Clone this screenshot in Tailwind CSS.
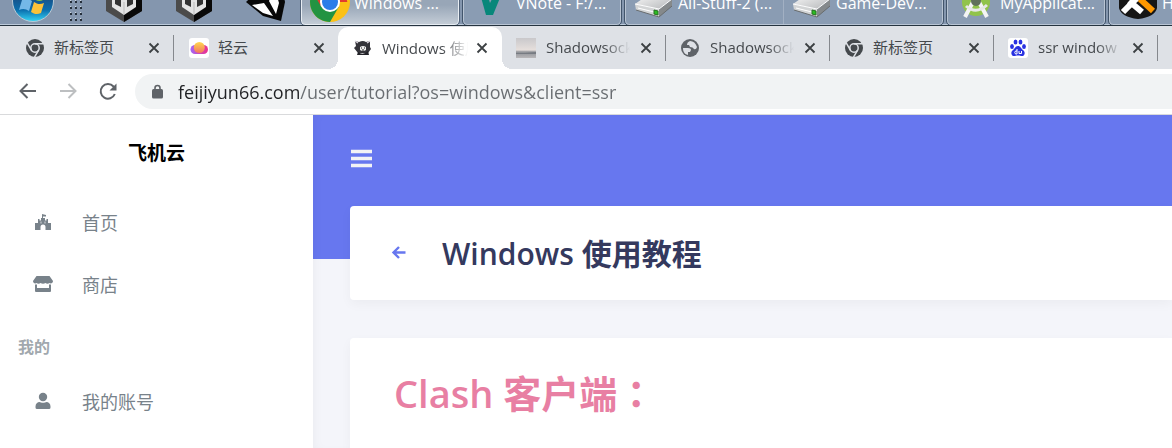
<!DOCTYPE html>
<html lang="zh-CN">
<head>
<meta charset="utf-8">
<title>Windows 使用教程</title>
<script src="https://cdn.jsdelivr.net/npm/@tailwindcss/browser@4"></script>
</head>
<body class="flex min-h-screen flex-col overflow-x-hidden bg-white font-['Open_Sans','Noto_Sans_CJK_SC',sans-serif]">
<svg class="absolute h-0 w-0" aria-hidden="true">
  <defs>
    <linearGradient id="orb" x1="0" y1="0" x2="0" y2="1"><stop offset=".4" stop-color="#174f86"/><stop offset=".72" stop-color="#0b6fae"/><stop offset="1" stop-color="#35d5f5"/></linearGradient>
    <linearGradient id="metal" x1="0" y1="0" x2="1" y2="1"><stop offset="0" stop-color="#f8f8f8"/><stop offset="1" stop-color="#b5b7b9"/></linearGradient>
    <linearGradient id="sun" x1="0" y1="0" x2="0" y2="1"><stop offset="0" stop-color="#ffd84e"/><stop offset="1" stop-color="#f3745f"/></linearGradient>
    <linearGradient id="cloud" x1="0" y1="0" x2="1" y2="0"><stop offset="0" stop-color="#a566f5"/><stop offset="1" stop-color="#ee2f8b"/></linearGradient>
    <linearGradient id="sky" x1="0" y1="0" x2="0" y2="1"><stop offset="0" stop-color="#c9c8cb"/><stop offset=".6" stop-color="#e6dfdc"/><stop offset=".7" stop-color="#8f9297"/><stop offset="1" stop-color="#b9b7b9"/></linearGradient>
  </defs>
  <symbol id="close" viewBox="0 0 12 12"><path d="M1.5 1.5l9 9M10.500 1.500l-9 9" stroke="#3c4043" stroke-width="1.800" fill="none"/></symbol>
  <symbol id="chrome-gray" viewBox="0 0 20 20"><circle cx="10" cy="10" r="9" fill="#45494d"/><circle cx="10" cy="10" r="4.200" fill="none" stroke="#dee1e6" stroke-width="1.500"/><path d="M10 5.800h8.400M6.400 12.100L2.200 4.900M13.600 12.100l-4.200 7.200" stroke="#dee1e6" stroke-width="1.500"/></symbol>
  <symbol id="hub" viewBox="0 0 36 42"><path d="M18 0l18 10v21L18 42 0 31V10z" fill="#4b4b4b"/><path d="M18 21L36 10v21L18 42z" fill="#090909"/><path d="M18 6l12 7v14l-12 8-12-8V13z" fill="#e4e4e4"/><path d="M9 17l6 3v7l-6-3zM27 17l-6 3v7l6-3z" fill="#333"/><path d="M18 22v12" stroke="#bbb"/></symbol>
  <symbol id="drive" viewBox="0 0 40 26"><path d="M1 12L14 3l24 4-13 10z" fill="url(#metal)"/><path d="M1 12l24 5v8L2 18z" fill="#d2d4d5"/><path d="M25 17L38 7v7L25 25z" fill="#85898b"/><path d="M1 12l24 5L38 7M4 16l16 4" fill="none" stroke="#fff"/><path d="M2 18l23 7 13-11" fill="none" stroke="#686c6e"/><path d="M20 18l4 1v4l-4-1z" fill="#2bbd22" stroke="#267020"/></symbol>
</svg>

<!-- Taskbar: only its lower edge is visible -->
<nav aria-label="Taskbar" class="flex h-[26px] shrink-0 items-end overflow-hidden border-b border-[#25333f] bg-[#8496ae] shadow-[inset_0_-1px_0_#bccada] text-white">
  <button aria-label="Start" class="ml-3 shrink-0"><svg class="mb-[3px] h-[42px] w-[42px]" viewBox="0 0 42 42"><circle cx="21" cy="21" r="20.500" fill="url(#orb)" stroke="#b9cad6"/><path d="M10 20c4-2 7-1 10 1l-3 10c-3-2-6-3-10-1z" fill="#74b8e8"/><path d="M22 22c3 2 6 3 10 1l-3 10c-4 2-7 1-10-1z" fill="#fbc23a"/><path d="M23 9c3 2 6 3 10 1l-2 10c-3 2-6 1-9-1z" fill="#8dc63f"/></svg></button>
  <svg class="mb-[3px] ml-4 h-6 w-3 shrink-0" viewBox="0 0 12 24"><path d="M0 4h12M0 10h12M0 16h12M0 22h12" stroke="#26303c" stroke-width="2" stroke-dasharray="2 3"/><path d="M0 2.500h12M0 8.500h12M0 14.500h12M0 20.500h12" stroke="#cbd5e0" stroke-dasharray="1 4"/></svg>
  <button aria-label="Unity Hub" class="ml-6 shrink-0"><svg class="mb-[3px] h-[42px] w-9"><use href="#hub"/></svg></button>
  <button aria-label="Unity Hub" class="ml-[34px] shrink-0"><svg class="mb-[3px] h-[42px] w-9"><use href="#hub"/></svg></button>
  <button aria-label="Unity" class="ml-[33px] shrink-0"><svg class="mb-1 h-10 w-10" viewBox="0 0 40 40"><path d="M1 21L17 6l19-4 4 19-4 19-18-5z" fill="#080808"/><path d="M7 24l12-2 9 13-10-3zM24 20l6-12 4 14-3 11z" fill="#fff"/></svg></button>
  <div class="ml-4 flex gap-1">
    <button class="flex h-10 w-[158px] shrink-0 items-end gap-3 rounded-sm border border-[#e7edf3] bg-linear-to-b from-[#98a6b7] from-50% to-[#c3ccd6] pl-2 outline outline-[#53647a]"><svg class="mb-[2px] h-10 w-10" viewBox="0 0 40 40"><circle cx="20" cy="20" r="20" fill="#fbc116"/><path d="M20 20L2.700 10A20 20 0 0 0 20 40l8.700-15z" fill="#229342"/><path d="M20 20h17.300A20 20 0 0 0 2.700 10l8.700 15z" fill="#e33b2e"/><circle cx="20" cy="20" r="10" fill="#fff"/><circle cx="20" cy="20" r="8" fill="#2b7de9"/></svg><span class="-ml-2 mb-[9px] text-base leading-6">Windows ...</span></button>
    <button class="flex h-10 w-[158px] shrink-0 items-end gap-3 rounded-sm border border-[#b8c4d3] bg-[#8a9cb3] pl-2 outline outline-[#42556c]"><svg class="mb-[9px] h-8 w-8" viewBox="0 0 32 32"><path d="M5 0h7l6 20L28 0h6L21 32h-7z" fill="#07877a"/></svg><span class="mb-[9px] text-base leading-6">VNote - F:/...</span></button>
    <div class="flex rounded-sm border border-[#b8c4d3] bg-[#8a9cb3] outline outline-[#42556c]">
      <button class="flex h-[38px] w-[158px] shrink-0 items-end gap-3 border-r border-[#a2b0c3] pl-2"><svg class="mb-[6px] h-[26px] w-10"><use href="#drive"/></svg><span class="-ml-2 mb-[9px] text-base leading-6">All-Stuff-2 (...</span></button>
      <button class="flex h-[38px] w-[158px] shrink-0 items-end gap-3 pl-2"><svg class="mb-[6px] h-[26px] w-10"><use href="#drive"/></svg><span class="-ml-2 mb-[9px] text-base leading-6">Game-Dev...</span></button>
    </div>
    <button class="flex h-10 w-[158px] shrink-0 items-end gap-3 rounded-sm border border-[#b8c4d3] bg-[#8a9cb3] pl-3 outline outline-[#42556c]"><svg class="mb-[6px] h-8 w-8" viewBox="0 0 32 32"><circle cx="16" cy="16" r="14" fill="#91c34b"/><path d="M14 14L5 31M18 14l9 17" stroke="#f4f4f4" stroke-width="4"/><path d="M6 20q10 9 21-1" stroke="#e7e7e7" stroke-width="3" fill="none"/><circle cx="16" cy="15" r="5" fill="#60705a"/></svg><span class="-ml-1 mb-[9px] text-base leading-6">MyApplicat...</span></button>
    <button class="flex h-10 w-[158px] shrink-0 items-end gap-3 rounded-sm border border-[#b8c4d3] bg-[#8a9cb3] pl-2 outline outline-[#42556c]"><svg class="mb-[5px] h-10 w-10" viewBox="0 0 40 40"><path d="M1 0h38v29q-2 9-19 11Q3 38 1 29z" fill="#161616"/><path d="M5 33L20 18M11 22l13 11" stroke="#fff" stroke-width="6"/><path d="M22 20l13 12" stroke="#ff9800" stroke-width="6"/></svg><span class="-ml-2 mb-[9px] text-base leading-6">H</span></button>
  </div>
</nav>

<!-- Browser tabs -->
<div role="tablist" class="flex h-[43px] shrink-0 overflow-hidden bg-[#dee1e6] pl-[10px] text-[15px] text-[#45494d]">
  <div class="flex w-[164px] shrink-0 items-center pl-[15px]"><button role="tab" class="flex flex-1 items-center gap-[9px] overflow-hidden"><svg class="h-5 w-5 shrink-0"><use href="#chrome-gray"/></svg><span class="whitespace-nowrap">新标签页</span></button><button aria-label="关闭" class="mx-[13px]"><svg class="h-3 w-3"><use href="#close"/></svg></button><i class="h-[26px] w-px bg-[#85888d]"></i></div>
  <div class="flex w-[164px] shrink-0 items-center pl-[15px]"><button role="tab" class="flex flex-1 items-center gap-[9px] overflow-hidden"><svg class="h-5 w-5 shrink-0" viewBox="0 0 20 20"><rect width="20" height="20" rx="3" fill="#fff"/><path d="M6 7a4.500 4.500 0 1 0 0 9h8.500a4.500 4.500 0 1 0 0-9z" fill="url(#cloud)"/><circle cx="10.300" cy="9.500" r="5.500" fill="url(#sun)"/></svg><span class="whitespace-nowrap">轻云</span></button><button aria-label="关闭" class="mx-[13px]"><svg class="h-3 w-3"><use href="#close"/></svg></button></div>
  <div class="relative mt-px flex w-[164px] shrink-0 items-center rounded-t-[10px] bg-white pl-[15px] before:absolute before:bottom-0 before:-left-[10px] before:size-[10px] before:bg-[radial-gradient(circle_at_0_0,transparent_10px,white_10px)] after:absolute after:-right-[10px] after:bottom-0 after:size-[10px] after:bg-[radial-gradient(circle_at_100%_0,transparent_10px,white_10px)]"><button role="tab" aria-selected="true" class="flex flex-1 items-center gap-[9px] overflow-hidden"><svg class="h-5 w-5 shrink-0" viewBox="0 0 20 20"><path d="M2 3l4 1q4-2 7 0l4-1v6l1 2-3 4H5L1 10l2-2z" fill="#34343a"/><path d="M7 9q3-2 6 0v3q-3 2-6 0z" fill="#eee"/><path d="M8 10h1M11 10h1M9 12h2" stroke="#222"/><path d="M5 14q5 4 10-1l1 4H4z" fill="#222228"/><path d="M2 3l3 2M17 3l-3 2" stroke="#d7d2dc" stroke-width="1.500"/></svg><span class="flex-1 overflow-hidden text-left whitespace-nowrap [mask-image:linear-gradient(to_right,#000_70%,transparent)]">Windows 使用教程</span></button><button aria-label="关闭" class="mr-[14px] ml-2"><svg class="h-3 w-3"><use href="#close"/></svg></button></div>
  <div class="flex w-[164px] shrink-0 items-center pl-[14px]"><button role="tab" class="flex flex-1 items-center gap-[10px] overflow-hidden"><svg class="h-5 w-5 shrink-0" viewBox="0 0 20 20"><rect width="20" height="20" fill="url(#sky)"/><path d="M0 15h9l11-1v2H0z" fill="#777b82"/></svg><span class="flex-1 overflow-hidden text-left whitespace-nowrap [mask-image:linear-gradient(to_right,#000_70%,transparent)]">Shadowsocks</span></button><button aria-label="关闭" class="mr-[13px] ml-[10px]"><svg class="h-3 w-3"><use href="#close"/></svg></button><i class="h-[26px] w-px bg-[#85888d]"></i></div>
  <div class="flex w-[164px] shrink-0 items-center pl-[14px]"><button role="tab" class="flex flex-1 items-center gap-[10px] overflow-hidden"><svg class="h-5 w-5 shrink-0" viewBox="0 0 20 20"><circle cx="10" cy="10" r="9" fill="#5f6368"/><path d="M3 10h5q3 0 3 2l-1 2H8v3c-4-1-5-4-5-7zM10 3q5 0 7 6-1 3-3 2-1-2-4-2l-1-2H7q0-3 3-4z" fill="#dee1e6"/></svg><span class="flex-1 overflow-hidden text-left whitespace-nowrap [mask-image:linear-gradient(to_right,#000_70%,transparent)]">Shadowsocks</span></button><button aria-label="关闭" class="mr-[13px] ml-[10px]"><svg class="h-3 w-3"><use href="#close"/></svg></button><i class="h-[26px] w-px bg-[#85888d]"></i></div>
  <div class="flex w-[164px] shrink-0 items-center pl-[14px]"><button role="tab" class="flex flex-1 items-center gap-[9px] overflow-hidden"><svg class="h-5 w-5 shrink-0"><use href="#chrome-gray"/></svg><span class="whitespace-nowrap">新标签页</span></button><button aria-label="关闭" class="mx-[13px]"><svg class="h-3 w-3"><use href="#close"/></svg></button><i class="h-[26px] w-px bg-[#85888d]"></i></div>
  <div class="flex w-[164px] shrink-0 items-center pl-[14px]"><button role="tab" class="flex flex-1 items-center gap-[10px] overflow-hidden"><svg class="h-5 w-5 shrink-0" viewBox="0 0 20 20"><rect width="20" height="20" rx="3" fill="#fff"/><g fill="#2932e1"><ellipse cx="4" cy="8.500" rx="1.900" ry="2.500"/><ellipse cx="7.500" cy="4" rx="1.900" ry="2.600"/><ellipse cx="12.500" cy="4" rx="1.900" ry="2.600"/><ellipse cx="16" cy="8.500" rx="1.900" ry="2.500"/><path d="M10 8c2.500 0 3 2.500 5 4 3 2.500 1.500 6-1 6-1.500 0-2-.5-4-.5s-2.500.5-4 .5c-2.500 0-4-3.500-1-6 2-1.500 2.500-4 5-4z"/></g><path d="M9 11v5H7.500q-1.500-1.500 0-3H9M11 13v2.500h2.500V13" stroke="#fff" fill="none"/></svg><span class="flex-1 overflow-hidden text-left whitespace-nowrap [mask-image:linear-gradient(to_right,#000_70%,transparent)]">ssr window</span></button><button aria-label="关闭" class="mr-[13px] ml-[10px]"><svg class="h-3 w-3"><use href="#close"/></svg></button><i class="h-[26px] w-px bg-[#85888d]"></i></div>
</div>

<!-- Address bar -->
<div class="flex h-[46px] shrink-0 items-center border-b border-[#d9dadc] bg-white pl-[18px]">
  <button aria-label="后退"><svg class="h-5 w-5" viewBox="0 0 20 20" fill="none" stroke="#5f6368" stroke-width="2"><path d="M18 9H2.500M9.500 2L2.500 9l7 7"/></svg></button>
  <button aria-label="前进" class="ml-5"><svg class="h-5 w-5" viewBox="0 0 20 20" fill="none" stroke="#bdbfc1" stroke-width="2"><path d="M2 9h15.500M10.500 2l7 7-7 7"/></svg></button>
  <button aria-label="刷新" class="ml-5"><svg class="h-5 w-5" viewBox="0 0 20 20"><path d="M16.800 12A7.300 7.300 0 1 1 15.500 4.500l1 1.500" fill="none" stroke="#5f6368" stroke-width="2"/><path d="M18.500 1.500v7h-7z" fill="#5f6368"/></svg></button>
  <label class="ml-[17px] flex h-[35px] flex-1 items-center rounded-l-full bg-[#f1f3f4] pl-4">
    <svg class="h-4 w-3 shrink-0" viewBox="0 0 12 16" role="img" aria-label="地址"><rect x="1" y="5" width="11" height="9.500" rx="1.500" fill="#5f6368"/><path d="M4 6V4a2.500 2.500 0 0 1 5 0v2" fill="none" stroke="#5f6368" stroke-width="1.600"/></svg>
    <input type="text" value="feijiyun66.com/user/tutorial?os=windows&amp;client=ssr" class="ml-[15px] min-w-0 flex-1 bg-[linear-gradient(to_right,#202124_122px,#696d71_122px)] bg-clip-text text-lg leading-7 text-transparent outline-none">
  </label>
</div>

<div class="flex flex-1">
  <!-- Sidebar -->
  <aside class="w-[313px] shrink-0 bg-white text-lg text-[#78828a]">
    <a href="#" class="flex h-[77px] items-center justify-center text-[19px] font-bold text-black">飞机云</a>
    <nav>
      <a href="#" class="flex h-[62px] items-center pl-[33px]"><svg class="h-5 w-5" viewBox="0 0 20 20" fill="currentColor"><path d="M2 17v-7h3V6h1.500v1.500H8V5h1V1l4 1v1.500h-3V5h2v2.500h1.500V6H15v4h3v7h-5.500v-3a2.500 2.500 0 0 0-5 0v3z"/><path d="M8 8.500v2M12 8.500v2" stroke="#fff" stroke-width=".7"/></svg><span class="ml-[29px]">首页</span></a>
      <a href="#" class="flex h-[62px] items-center pl-[33px]"><svg class="h-5 w-5" viewBox="0 0 20 20" fill="currentColor"><path d="M3.500 1h13L20 6c0 2-2 3-3.500 2-1 1-3 1-4 0-1.500 1-3.500 1-5 0-1 1-3 1-4 0C2 9 0 8 0 6zM2 9.500h2V13h12V9.500h2V16q0 1-1 1H3q-1 0-1-1z"/></svg><span class="ml-[29px]">商店</span></a>
      <h2 class="flex h-[62px] items-center pl-[18px] text-base font-bold text-[#a1a8ae]">我的</h2>
      <a href="#" class="flex h-12 items-center pl-[33px]"><svg class="h-5 w-5" viewBox="0 0 20 20" fill="currentColor"><circle cx="10" cy="5" r="4.200"/><path d="M2.500 14.500c0-3 2-4.500 4-4.500 1.500 1 5.500 1 7 0 2 0 4 1.500 4 4.500V15.500q0 1.500-1.500 1.500H4q-1.500 0-1.500-1.500z"/></svg><span class="ml-[29px]">我的账号</span></a>
    </nav>
  </aside>

  <!-- Page content -->
  <main class="flex min-w-0 flex-1 flex-col bg-[linear-gradient(#6777ef_144px,#f4f5fa_144px)] pl-[37px] shadow-[inset_6px_0_12px_-6px_rgba(0,0,0,0.05)]">
    <div class="flex h-[91px] items-center pb-1"><button aria-label="菜单"><svg class="h-5 w-6" viewBox="0 0 24 20"><path d="M1 2.500h21M1 9.500h21M1 16.500h21" stroke="#f2f2f5" stroke-width="3.600"/></svg></button></div>
    <section class="flex h-[94px] shrink-0 items-center rounded-l bg-white pl-[41px] shadow-[0_4px_12px_rgba(0,0,0,0.04)]">
      <a href="#" aria-label="返回"><svg class="h-4 w-4" viewBox="0 0 16 16" fill="none" stroke="#6777ef" stroke-width="2.400"><path d="M14.500 7.500H3M8 2L2.500 7.500 8 13"/></svg></a>
      <h1 class="ml-[35px] text-[30px] font-semibold text-[#34395e]">Windows <span class="font-bold">使用教程</span></h1>
    </section>
    <section class="mt-[38px] flex-1 rounded-tl bg-white pt-7 pl-11 shadow-[0_4px_12px_rgba(0,0,0,0.04)]">
      <h2 class="text-[38px] leading-[52px] font-semibold text-[#e87fa3]">Clash <span class="font-bold">客户端<span lang="zh-TW" class="font-['Noto_Sans_CJK_TC',sans-serif]">：</span></span></h2>
    </section>
  </main>
</div>
</body>
</html>
